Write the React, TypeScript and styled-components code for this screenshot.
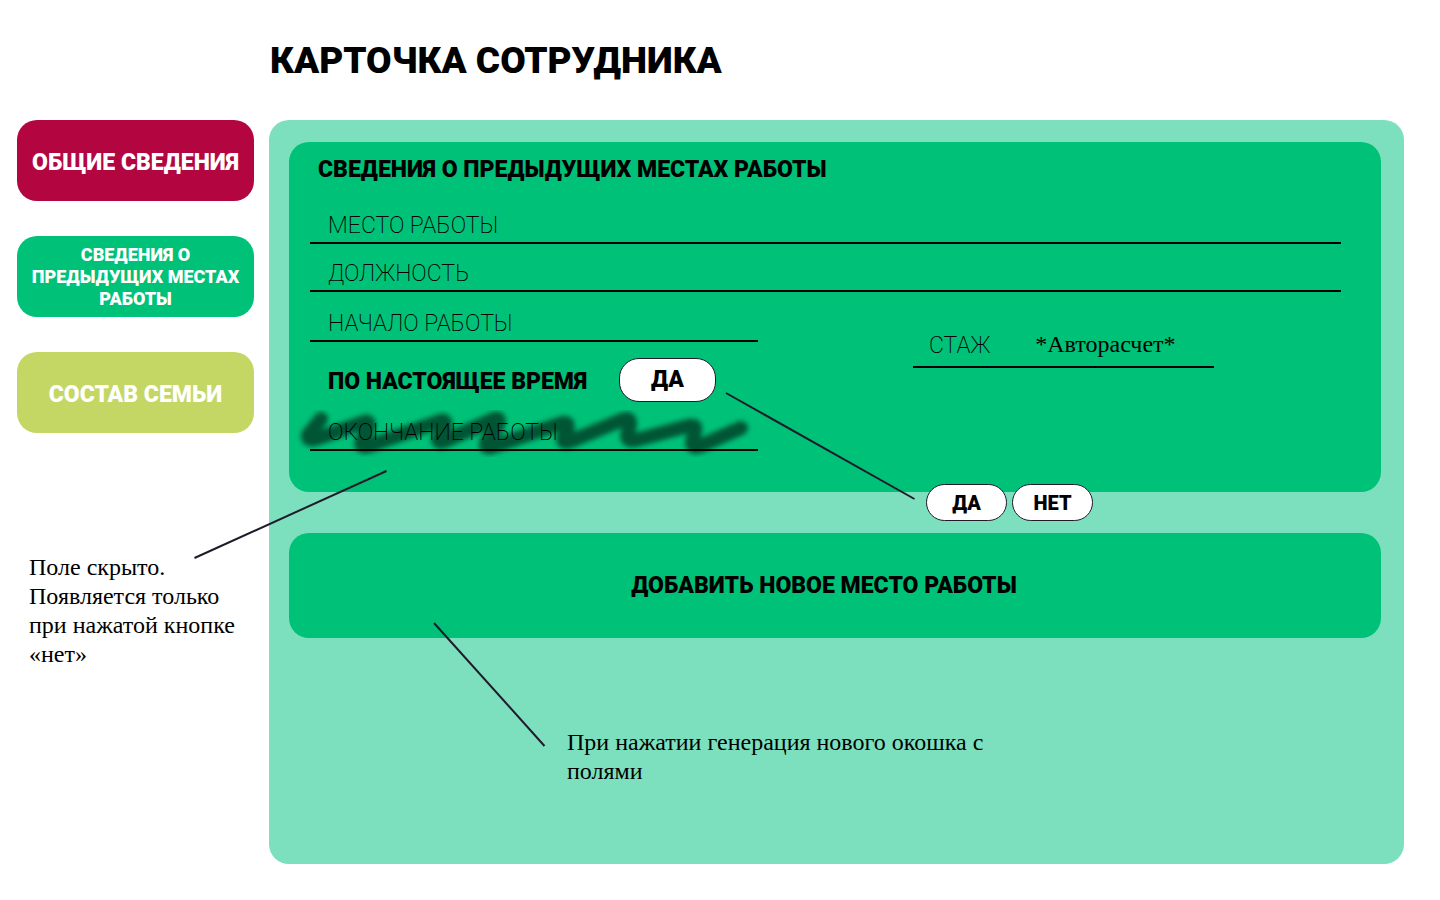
import React from "react";
import styled, { createGlobalStyle } from "styled-components";

const Global = createGlobalStyle`
  *, *::before, *::after { box-sizing: border-box; }
  body { margin: 0; background: #fff; color: #000; font-family: Roboto, "Open Sans", sans-serif; }
  button, input { font: inherit; color: inherit; margin: 0; }
`;

const INK = "#211a2b";
const GREEN = "#00c178";

const Page = styled.div`
  position: relative;
  min-height: 100vh;
  padding: 0 36px 36px 17px;
`;

const Title = styled.h1`
  margin: 0;
  padding: 40px 0 0 253px;
  height: 120px;
  font-size: 37px;
  line-height: 42px;
  font-weight: 900;
`;

const Columns = styled.div`
  display: grid;
  grid-template-columns: 237px minmax(0, 1fr);
  column-gap: 15px;
`;

const Sidebar = styled.aside`
  display: flex;
  flex-direction: column;
`;

const Tabs = styled.nav`
  display: flex;
  flex-direction: column;
  gap: 35px;
`;

const Tab = styled.button<{ $color: string; $small?: boolean }>`
  height: 81px;
  padding: ${(p) => (p.$small ? "0 8px" : "4px 8px 0")};
  border: 0;
  border-radius: 20px;
  background: ${(p) => p.$color};
  color: #fff;
  font-size: ${(p) => (p.$small ? 18 : 23)}px;
  line-height: ${(p) => (p.$small ? 22 : 28)}px;
  font-weight: 900;
  cursor: pointer;
`;

const Note = styled.p`
  margin: 0;
  font-family: "Liberation Serif", serif;
  font-size: 24px;
  line-height: 29px;
`;

const SideNote = styled(Note)`
  padding: 120px 0 0 12px;
`;

const PanelNote = styled(Note)`
  width: 440px;
  margin: 90px 0 0 278px;
`;

const Panel = styled.main`
  min-height: 744px;
  padding: 22px 23px 22px 20px;
  border-radius: 20px;
  background: #7ce0be;
`;

const Card = styled.form`
  padding: 14px 40px 41px 21px;
  border-radius: 20px;
  background: ${GREEN};
`;

const Heading = styled.h2`
  margin: 0 0 12px;
  padding-left: 8px;
  font-size: 23px;
  line-height: 28px;
  font-weight: 900;
`;

const Field = styled.div<{ $tall?: boolean }>`
  position: relative;
  display: flex;
  align-items: flex-end;
  gap: 16px;
  height: ${(p) => (p.$tall ? 50 : 48)}px;
  padding: 0 0 2px 18px;
  border-bottom: 2px solid #000;
`;

const Label = styled.label`
  position: relative;
  font-size: 23px;
  line-height: 28px;
  font-weight: 200;
  white-space: nowrap;
`;

const Input = styled.input`
  position: relative;
  flex: 1;
  min-width: 0;
  height: 28px;
  padding: 0;
  border: 0;
  outline: 0;
  background: transparent;
  font-size: 23px;
`;

const Period = styled.div`
  display: grid;
  grid-template-columns: 448px 301px;
  column-gap: 155px;
`;

const Experience = styled(Field)`
  height: 40px;
  margin-top: 36px;
  padding: 0 0 6px 16px;
  gap: 45px;
`;

const Auto = styled.output`
  font-family: "Liberation Serif", serif;
  font-size: 24px;
  line-height: 32px;
`;

const Current = styled.div`
  display: flex;
  align-items: center;
  justify-content: space-between;
  width: 406px;
  margin: 16px 0 1px;
  padding-left: 18px;
  font-size: 23px;
  line-height: 28px;
  font-weight: 900;
  white-space: nowrap;
`;

const CurrentText = styled.span`
  padding-top: 4px;
`;

const Pill = styled.button<{ $small?: boolean }>`
  width: ${(p) => (p.$small ? 81 : 97)}px;
  height: ${(p) => (p.$small ? 37 : 44)}px;
  padding: 0;
  border: 1px solid ${INK};
  border-radius: 20px;
  background: #fff;
  font-size: ${(p) => (p.$small ? 20 : 23)}px;
  line-height: 28px;
  font-weight: 900;
  cursor: pointer;
`;

const Choices = styled.div`
  position: absolute;
  left: 926px;
  top: 484px;
  display: flex;
  gap: 5px;
`;

const AddButton = styled.button`
  display: block;
  width: 100%;
  height: 105px;
  margin-top: 41px;
  padding: 0 22px 0 0;
  border: 0;
  border-radius: 20px;
  background: ${GREEN};
  font-size: 23px;
  line-height: 28px;
  font-weight: 900;
  cursor: pointer;
`;

const Pointers = styled.svg`
  position: absolute;
  left: 0;
  top: 0;
  pointer-events: none;
`;

const Scribble = styled.svg`
  position: absolute;
  left: -20px;
  top: -3px;
  pointer-events: none;
`;

export default function App() {
  return (
    <Page>
      <Global />
      <Title>КАРТОЧКА СОТРУДНИКА</Title>
      <Columns>
        <Sidebar>
          <Tabs>
            <Tab type="button" $color="#b30641">ОБЩИЕ СВЕДЕНИЯ</Tab>
            <Tab type="button" $color={GREEN} $small>СВЕДЕНИЯ О ПРЕДЫДУЩИХ МЕСТАХ РАБОТЫ</Tab>
            <Tab type="button" $color="#c4d765">СОСТАВ СЕМЬИ</Tab>
          </Tabs>
          <SideNote>Поле скрыто. Появляется только при нажатой кнопке «нет»</SideNote>
        </Sidebar>
        <Panel>
          <Card>
            <Heading>СВЕДЕНИЯ О ПРЕДЫДУЩИХ МЕСТАХ РАБОТЫ</Heading>
            <Field>
              <Label htmlFor="place">МЕСТО РАБОТЫ</Label>
              <Input id="place" />
            </Field>
            <Field>
              <Label htmlFor="position">ДОЛЖНОСТЬ</Label>
              <Input id="position" />
            </Field>
            <Period>
              <div>
                <Field $tall>
                  <Label htmlFor="start">НАЧАЛО РАБОТЫ</Label>
                  <Input id="start" />
                </Field>
                <Current>
                  <CurrentText id="current">ПО НАСТОЯЩЕЕ ВРЕМЯ</CurrentText>
                  <Pill type="button" aria-describedby="current">ДА</Pill>
                </Current>
                <Field>
                  <Scribble width="480" height="64" viewBox="290 400 480 64" aria-hidden="true">
                    <defs>
                      <filter id="soft" x="-5%" y="-30%" width="110%" height="160%">
                        <feGaussianBlur stdDeviation="2.5" />
                      </filter>
                    </defs>
                    <path
                      d="M321 419 L308 435 Q307 441 316 439 L364 422 Q371 420 368 429 L361 443 Q361 448 369 446 L440 421 Q448 419 444 428 L438 439 Q438 444 445 441 L494 419 Q502 417 497 427 L486 443 Q485 449 492 447 L562 423 Q570 421 567 431 L563 439 Q563 444 571 441 L622 420 Q631 416 630 425 L627 436 Q628 442 636 440 L688 426 Q697 424 695 431 L692 442 Q692 449 700 446 L741 428"
                      fill="none"
                      stroke="#000"
                      strokeOpacity="0.56"
                      strokeWidth="14"
                      strokeLinecap="round"
                      strokeLinejoin="round"
                      filter="url(#soft)"
                    />
                  </Scribble>
                  <Label htmlFor="end">ОКОНЧАНИЕ РАБОТЫ</Label>
                  <Input id="end" />
                </Field>
              </div>
              <Experience>
                <Label htmlFor="experience">СТАЖ</Label>
                <Auto id="experience">*Авторасчет*</Auto>
              </Experience>
            </Period>
          </Card>
          <AddButton type="button">ДОБАВИТЬ НОВОЕ МЕСТО РАБОТЫ</AddButton>
          <PanelNote>При нажатии генерация нового окошка с полями</PanelNote>
        </Panel>
      </Columns>
      <Choices>
        <Pill type="button" $small>ДА</Pill>
        <Pill type="button" $small>НЕТ</Pill>
      </Choices>
      <Pointers width="1000" height="800" aria-hidden="true">
        <g stroke={INK} strokeWidth="2">
          <path d="M194.500 558 L386.500 471" />
          <path d="M726 393 L914.500 499" />
          <path d="M434 623 L544.500 746" />
        </g>
      </Pointers>
    </Page>
  );
}
